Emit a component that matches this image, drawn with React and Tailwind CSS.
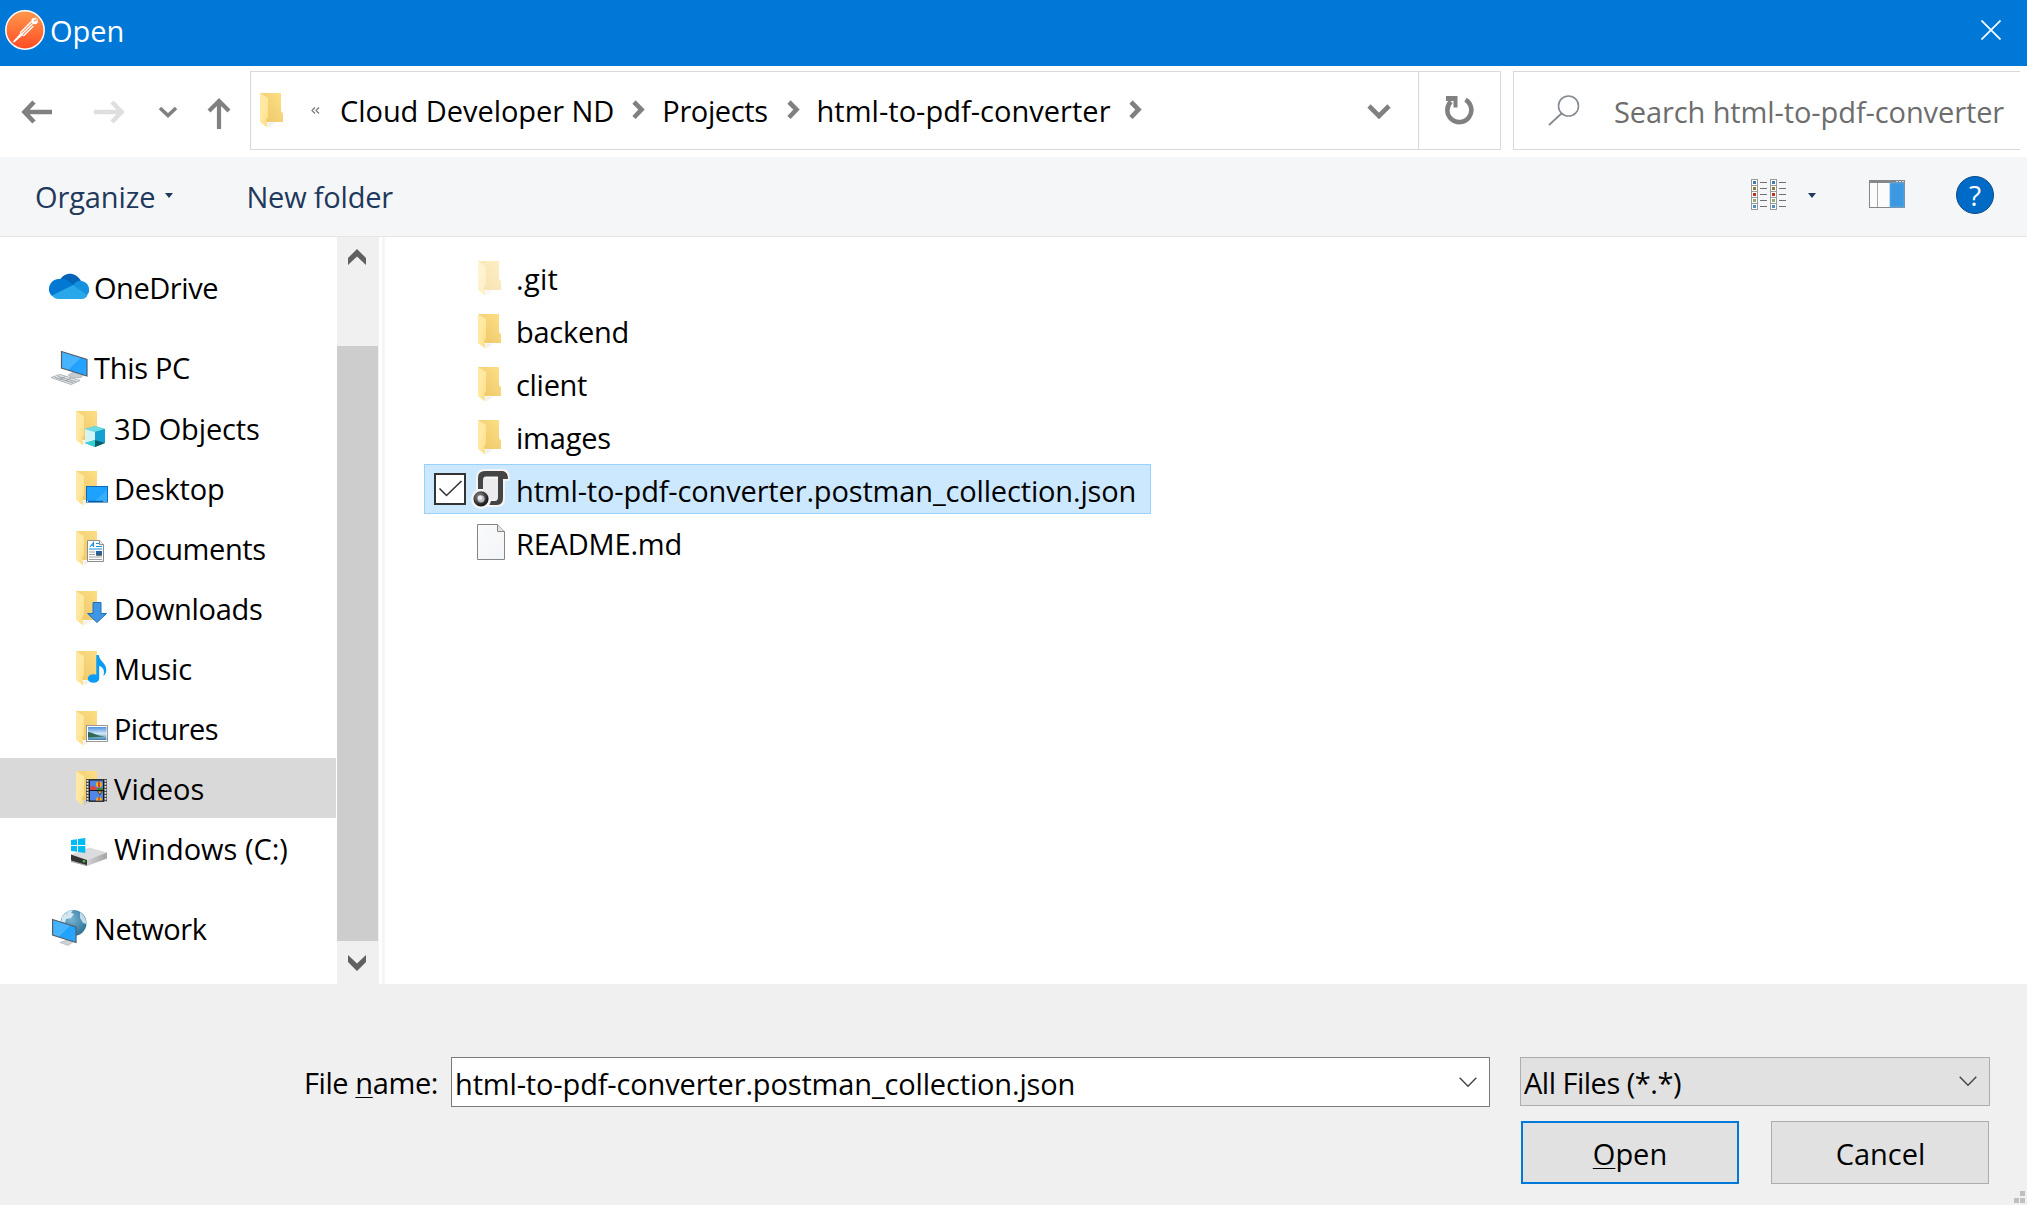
function PostmanLogo() {
  return (
    <svg className="h-10 w-10 shrink-0" viewBox="0 0 40 40">
      <defs>
        <linearGradient id="pm" x1="0" y1="0" x2="0" y2="1">
          <stop offset="0" stopColor="#ff9a4d" />
          <stop offset="1" stopColor="#ff4b24" />
        </linearGradient>
      </defs>
      <circle cx="20" cy="20" r="19.2" fill="url(#pm)" stroke="#fff" strokeWidth="1.5" />
      <path d="M9 31 L15.500 23 L18.500 25 Z" fill="#fff" />
      <path d="M15.500 22.500 L26 12 M18.800 25.500 L28 16.500 M17 24 L27 14.300" stroke="#fff" strokeWidth="1.500" strokeLinecap="round" />
      <path d="M9 31.500 L17 24" stroke="#fff" strokeWidth="1.800" strokeLinecap="round" />
      <circle cx="29.600" cy="11" r="3.300" fill="#fff" />
      <path d="M29 11 l3 -1.600" stroke="#ff8a45" strokeWidth="1.100" />
    </svg>
  );
}

function FolderShape() {
  return (
    <>
      <path d="M6.500 29.500 L15 29.500 L8.500 34.500 Z" fill="#000" opacity=".06" />
      <path d="M0 0 H21 V18 L23 20.500 V29 H6 Z" fill="url(#folderBack)" />
      <path d="M0 0 L8 5 V24.500 L6.300 26 L7.200 34.500 L0 29 Z" fill="url(#folderFlap)" />
    </>
  );
}

function Gradients() {
  return (
    <svg className="absolute h-0 w-0" aria-hidden="true">
      <defs>
        <linearGradient id="folderBack" x1="0" y1="1" x2="1" y2="0">
          <stop offset="0" stopColor="#eec565" />
          <stop offset=".5" stopColor="#f5d277" />
          <stop offset="1" stopColor="#fde086" />
        </linearGradient>
        <linearGradient id="folderFlap" x1="0" y1="0" x2="1" y2="1">
          <stop offset="0" stopColor="#ffe9a6" />
          <stop offset=".5" stopColor="#ffe8a0" />
          <stop offset="1" stopColor="#fddb78" />
        </linearGradient>
        <linearGradient id="screen" x1="0" y1="0" x2="1" y2="1">
          <stop offset="0" stopColor="#3fb4ff" />
          <stop offset=".5" stopColor="#49b4fd" />
          <stop offset=".52" stopColor="#1fa2ff" />
          <stop offset="1" stopColor="#2ba6ff" />
        </linearGradient>
        <linearGradient id="drive" x1="0" y1="0" x2="1" y2="0">
          <stop offset="0" stopColor="#d2d2d4" />
          <stop offset="1" stopColor="#a5a5a8" />
        </linearGradient>
        <radialGradient id="globe" cx=".4" cy=".35" r=".7">
          <stop offset="0" stopColor="#79b5d3" />
          <stop offset="1" stopColor="#2b6f96" />
        </radialGradient>
        <linearGradient id="sky" x1="0" y1="0" x2="0" y2="1">
          <stop offset="0" stopColor="#4d93e0" />
          <stop offset=".5" stopColor="#cfe6f6" />
          <stop offset="1" stopColor="#3d7fae" />
        </linearGradient>
        <linearGradient id="paper" x1="0" y1="0" x2="1" y2="1">
          <stop offset="0" stopColor="#fbfbfb" />
          <stop offset="1" stopColor="#f1f4f7" />
        </linearGradient>
        <radialGradient id="ring" cx=".35" cy=".3" r=".8">
          <stop offset="0" stopColor="#8b8b8b" />
          <stop offset="1" stopColor="#1d1d1d" />
        </radialGradient>
      </defs>
    </svg>
  );
}

const overlays = {
  cube: (
    <>
      <path d="M9 18 L19 15 L29 18 V32 L19 36 L9 32 Z" fill="#27b5d3" />
      <path d="M9 18 L19 15 L29 18 L19 21 Z" fill="#6ddbe2" />
      <path d="M9 18 L19 21 V29 L9 32 Z" fill="#d3f3f5" />
      <path d="M19 21 L29 18 V32 L19 29 Z" fill="#14a0d2" />
      <path d="M9 32 L19 29 V36 Z" fill="#35cfd6" />
      <path d="M29 32 L19 29 V36 Z" fill="#0a5c66" />
    </>
  ),
  desktop: (
    <>
      <rect x="10.500" y="15.500" width="21" height="15.500" fill="#1ea2ff" stroke="#0b6cb9" />
      <path d="M19 30 L31 19 V30 Z" fill="#48b6ff" opacity=".6" />
      <path d="M11 30.500 H31" stroke="#0a5fa5" strokeWidth="1.500" />
      <path d="M11 30.300 h1 M27.500 30.300 h1 M29.500 30.300 h1" stroke="#fff" />
    </>
  ),
  document: (
    <>
      <path d="M11.500 9.500 H23.500 L27.500 13.500 V30.500 H11.500 Z" fill="#fff" stroke="#8d8d8d" />
      <path d="M23.500 9.500 V13.500 H27.500" fill="#eee" stroke="#8d8d8d" />
      <path d="M14 16 L17.500 11.500 V16 M15.500 14.300 H17.500 M20 12.500 H23 M20 15.500 H26 M13 18 H26" stroke="#1b8fe0" strokeWidth="1.100" fill="none" />
      <path d="M13 21 H19 M13 23.500 H19 M13 26 H26 M13 28.500 H26" stroke="#9a9a9a" strokeWidth=".9" />
      <rect x="20" y="20" width="6" height="4.500" fill="#2d5f9e" />
      <path d="M20 24.500 L23 22.500 L26 24.500 Z" fill="#2c5b3b" />
    </>
  ),
  download: <path d="M17 11.500 H25 V22.500 H30.500 L21 31.500 L11.500 22.500 H17 Z" fill="#3f96e4" stroke="#2170b4" />,
  music: (
    <>
      <ellipse cx="17.500" cy="27.500" rx="5.700" ry="4.300" fill="#0a9cf5" />
      <path d="M20.300 4 H22.800 C23.300 10 30.300 12 30.300 19 C30.300 21.500 29.300 23.500 27.300 25 C29 20 27.500 16.500 23.200 14.800 V27.500 H20.300 Z" fill="#0a9cf5" />
    </>
  ),
  picture: (
    <>
      <rect x="10.500" y="14.500" width="21" height="16" fill="#fff" stroke="#9a9a9a" />
      <rect x="12" y="16" width="18.500" height="13" fill="url(#sky)" />
      <path d="M12 21 C16 21 20 24.500 29 25.500 L12 26.500 Z" fill="#2f6b52" />
    </>
  ),
  video: (
    <>
      <rect x="10" y="8" width="21" height="23" fill="#4e4e4e" />
      <path d="M11.500 9 V31 M29.500 9 V31" stroke="#e6e6e6" strokeWidth="1.800" strokeDasharray="1.700 1.300" />
      <rect x="13.500" y="9" width="14" height="21" fill="#4f86e8" stroke="#1b1b1b" />
      <path d="M14 16 L18 14.500 L22 19 H14 Z" fill="#d8463f" />
      <path d="M22 17 H27 V19 H20 Z" fill="#3a8a3a" />
      <path d="M14 19.500 H27" stroke="#1b1b1b" />
      <circle cx="23" cy="13.500" r="3" fill="#f2b31b" />
      <path d="M23 10.500 v6" stroke="#c4261d" strokeWidth="1.500" />
      <path d="M21.500 20 h4.500 l-2.200 4 Z" fill="#f2b31b" stroke="#222" strokeWidth=".7" />
      <path d="M20 29.500 a3 3.500 0 0 1 6 0 Z" fill="#f2b31b" />
      <path d="M23 26 v3.500" stroke="#c4261d" strokeWidth="1.200" />
    </>
  ),
};

function PlaceFolder({ kind }) {
  return (
    <svg className="h-[38px] w-9 shrink-0" viewBox="0 -2 36 38">
      <FolderShape />
      {overlays[kind]}
    </svg>
  );
}

function OneDriveIcon() {
  return (
    <svg className="mb-0.5 h-[26px] w-10 shrink-0" viewBox="0 0 40 26">
      <path d="M11 7 C14 0 26 -3 32 8 L24 16 L10 12 Z" fill="#0364b8" />
      <path d="M11 6 C16 5 20 8 24 12 L14 20 L3 23 C-1 19 -1 14 2 10 C4 7 8 5.500 11 6 Z" fill="#0078d4" />
      <path d="M24 12 C27 8 30 7.500 33 8 C38 9 41 14 40 19 L37 24 L24 18 Z" fill="#1490df" />
      <path d="M3 22.500 L24 12 L38.500 22.500 C37 25 35 26 33 26 H9 C6.500 26 4.500 24.500 3 22.500 Z" fill="#28a8ea" />
    </svg>
  );
}

function PcIcon() {
  return (
    <svg className="h-9 w-[37px] shrink-0" viewBox="0 0 37 36">
      <path d="M17 25 L24 21.500 L33 24.500 L30 27.500 L22 28 Z" fill="#c6ccd1" stroke="#9ba3a9" strokeWidth=".6" />
      <path d="M10.500 1.500 L36 9.500 V26 L10.500 18 Z" fill="url(#screen)" stroke="#53606b" strokeWidth="1.200" />
      <path d="M0 27.500 L9 24.500 L29 30.500 L20 34.500 Z" fill="#dfe3e6" stroke="#9fa6ab" strokeWidth=".8" />
      <path d="M4 27.500 L22 32.800 M7 26.500 L25 31.700 M9 29.500 L14 26.500 M15 31 L20 28" stroke="#8f979d" strokeWidth=".8" />
    </svg>
  );
}

function DriveIcon() {
  return (
    <svg className="mt-2 h-7 w-[37px] shrink-0" viewBox="0 0 37 28">
      <path d="M0 16.500 L18 9.500 L36 14.500 L16 22 Z" fill="#dcdcde" />
      <path d="M16 22 L36 14.500 V20.500 L16 28 Z" fill="url(#drive)" />
      <path d="M0 16.500 L16 22 V28 L0 22.500 Z" fill="#333" />
      <path d="M0 22.500 L16 27 V28 L0 24 Z" fill="#a5a5a5" />
      <circle cx="13" cy="23.300" r="1.200" fill="#3bd23b" />
      <path d="M0 2 L6 1.200 V7 H0 Z M7 1 L14.300 0 V7 H7 Z M0 8 H6 V13.800 L0 13 Z M7 8 H14.300 V15 L7 14 Z" fill="#00bcf2" />
    </svg>
  );
}

function NetworkIcon() {
  return (
    <svg className="h-9 w-9 shrink-0" viewBox="0 0 36 36">
      <circle cx="21.500" cy="13" r="13" fill="url(#globe)" />
      <path d="M10 7 C13 3 17 0.500 21 0.300 L19 3 L22 4 L19 8 L14 9 L13 13 L9 12 Z" fill="#d6e9f0" />
      <path d="M28 2 C32 5 34.500 9 34.300 14 L31 13 L28 8 Z M17 0.600 L13 4 L16 6 Z" fill="#bfdce8" />
      <path d="M8 32.500 L16 29.500 L21 32 L16 35.500 Z" fill="#ccd2d6" stroke="#9ba3a9" strokeWidth=".5" />
      <path d="M0.600 9.500 L24 17 V32.500 L0.600 25 Z" fill="url(#screen)" stroke="#53606b" strokeWidth="1.200" />
    </svg>
  );
}

function FolderIcon({ faded }) {
  return (
    <svg className={faded ? "mt-[3px] h-[35px] w-[33px] opacity-50" : "mt-[3px] h-[35px] w-[33px]"} viewBox="0 0 33 35">
      <FolderShape />
    </svg>
  );
}

function JsonIcon() {
  return (
    <svg className="h-[42px] w-10" viewBox="0 0 40 42">
      <g stroke="#f4f4f4" strokeWidth="4" strokeLinejoin="round" fill="#f4f4f4">
        <path d="M7 22 V10 Q7 3 14 3 H33 Q37 4 37 11 H32 V31 Q32 37 26 37 H18 L10 31 Z" />
        <circle cx="10" cy="31" r="8" />
      </g>
      <path d="M12 11 H27 V32 H20 L12 24 Z" fill="#ebebef" />
      <path d="M7 21 V10 Q7 3 14 3 H32 Q37 4 37 11 H32 V30 Q32 37 26 37 H18.500 L20 33 H24 Q27 33 27 29 V8.500 H15 Q12 8.500 12 12 V21 Z" fill="#444" />
      <circle cx="10" cy="30.800" r="5.600" fill="#b9bcc1" stroke="url(#ring)" strokeWidth="4" />
      <circle cx="9" cy="29.800" r="2.200" fill="#e9edf1" />
    </svg>
  );
}

function FileIcon() {
  return (
    <svg className="h-9 w-[34px]" viewBox="0 0 34 36">
      <path d="M0.500 0.500 H20.500 L27.500 7.500 V35.500 H0.500 Z" fill="url(#paper)" stroke="#858585" />
      <path d="M20.500 0.500 V7.500 H27.500" fill="#e2e2e2" stroke="#858585" />
    </svg>
  );
}

function Crumb() {
  return (
    <svg className="mb-0.5 h-5 w-[13px] shrink-0" viewBox="0 0 13 20">
      <path d="M2 2 L9.500 9.500 L2 17.500" fill="none" stroke="#808080" strokeWidth="4.600" />
    </svg>
  );
}

function ThinChevron() {
  return (
    <svg className="h-[11px] w-[18px]" viewBox="0 0 18 11">
      <path d="M0.700 0.700 L9 9.300 L17.300 0.700" fill="none" stroke="#444" strokeWidth="1.400" />
    </svg>
  );
}

function ViewIcon() {
  const colors = ["#3e7fb5", "#8c7a3c", "#c33318", "#8fae7c", "#4a8fc0"];
  return (
    <svg className="h-[31px] w-9 shrink-0" viewBox="0 0 36 31">
      {[0, 19].map((x) =>
        colors.map((c, i) => (
          <g key={x + c}>
            <rect x={x + 0.5} y={i * 6 + 0.5} width="6" height="6" fill="#fff" stroke="#9a9a9a" />
            <rect x={x + 2} y={i * 6 + 2} width="3" height="3" fill={c} />
            <path d={`M${x + 9} ${i * 6 + 3.5} h7`} stroke="#707070" />
          </g>
        ))
      )}
    </svg>
  );
}

function SmallCaret() {
  return (
    <svg className="h-[5px] w-2 shrink-0" viewBox="0 0 8 5">
      <path d="M0 0 H8 L4 5 Z" fill="#1e395b" />
    </svg>
  );
}

const places = [
  ["3D Objects", "cube", "pt-px tracking-[-0.15px]"],
  ["Desktop", "desktop", "pt-px tracking-[-0.2px]"],
  ["Documents", "document", "pt-px tracking-[-0.4px]"],
  ["Downloads", "download", "pt-0.5 tracking-[-0.3px]"],
  ["Music", "music", "pt-0.5 tracking-[-0.2px]"],
  ["Pictures", "picture", "pt-0.5 tracking-[-0.6px]"],
  ["Videos", "video", "pt-0.5 tracking-[0.1px]"],
];

const files = [
  [".git", "faded", "tracking-[0.3px]"],
  ["backend", "folder", "tracking-[-0.25px]"],
  ["client", "folder", "tracking-[-0.3px]"],
  ["images", "folder", "tracking-[-0.2px]"],
  ["html-to-pdf-converter.postman_collection.json", "json", "tracking-[-0.15px]"],
  ["README.md", "file", "tracking-[-0.2px]"],
];

function FileRow({ name, kind, tracking }) {
  const selected = kind === "json";
  return (
    <div
      className={
        selected
          ? "flex h-[50px] w-[727px] items-center gap-[5px] border border-[#99d1ff] bg-[#cce8ff] pl-[9px]"
          : "flex h-[50px] w-[727px] items-center gap-[5px] border border-transparent pl-[9px]"
      }
    >
      <div className="h-8 w-8 shrink-0">
        {selected && (
          <svg className="h-8 w-8" viewBox="0 0 32 32">
            <rect x="1" y="1" width="30" height="30" fill="#fff" stroke="#333" strokeWidth="2" />
            <path d="M5.500 15.500 L12.500 22.500 L27.500 8" fill="none" stroke="#333" strokeWidth="1.600" />
          </svg>
        )}
      </div>
      <div className="flex w-10 shrink-0 justify-end">
        {kind === "json" && <JsonIcon />}
        {kind === "file" && <FileIcon />}
        {(kind === "folder" || kind === "faded") && <FolderIcon faded={kind === "faded"} />}
      </div>
      <span className={`pt-[3px] ${tracking}`}>{name}</span>
    </div>
  );
}

export default function App() {
  return (
    <div className="flex h-[1205px] w-[2027px] flex-col overflow-hidden bg-white font-['Open_Sans',sans-serif] text-[29px] leading-[40px] whitespace-nowrap text-black">
      <Gradients />

      <header className="flex h-[66px] shrink-0 items-start bg-[#0078d8] pl-[5px] text-white">
        <div className="flex grow pt-[10px]">
          <PostmanLogo />
          <span className="pt-px pl-[5px]">Open</span>
        </div>
        <svg className="mt-5 mr-[26px] h-5 w-5" viewBox="0 0 20 20">
          <path d="M0.500 0.500 L19.500 19.500 M19.500 0.500 L0.500 19.500" stroke="#fff" strokeWidth="1.700" />
        </svg>
      </header>

      <div className="flex h-[91px] shrink-0 pt-[5px]">
        <div className="flex h-[79px] w-[250px] shrink-0 items-center">
          <svg className="mt-[3px] ml-[21px] h-6 w-[31px]" viewBox="0 0 31 24">
            <path d="M31 12 H4 M13 2 L3.500 12 L13 22" fill="none" stroke="#808080" strokeWidth="4.600" />
          </svg>
          <svg className="mt-[3px] ml-[42px] h-6 w-[31px]" viewBox="0 0 31 24">
            <path d="M0 12 H27 M18 2 L27.500 12 L18 22" fill="none" stroke="#dfdfdf" strokeWidth="4.600" />
          </svg>
          <svg className="mt-[2px] ml-[33px] h-3 w-[20px]" viewBox="0 0 20 12">
            <path d="M2 2 L10 9.500 L18 2" fill="none" stroke="#808080" strokeWidth="3.600" />
          </svg>
          <svg className="mt-[6px] ml-[29px] h-[31px] w-[24px]" viewBox="0 0 24 31">
            <path d="M12 31 V4 M2 13 L12 3 L22 13" fill="none" stroke="#808080" strokeWidth="4.200" />
          </svg>
        </div>

        <div className="flex h-[79px] w-[1251px] shrink-0 border border-[#d9d9d9]">
          <div className="flex grow items-center pl-[9px]">
            <svg className="h-[35px] w-6 shrink-0" viewBox="0 0 24 35">
              <FolderShape />
            </svg>
            <svg className="ml-[27px] h-[7px] w-[9px] shrink-0" viewBox="0 0 9 7">
              <path d="M4 0.500 L1 3.500 L4 6.500 M8 0.500 L5 3.500 L8 6.500" fill="none" stroke="#777" strokeWidth="1.200" />
            </svg>
            <span className="ml-5 tracking-[-0.05px]">Cloud Developer ND</span>
            <span className="ml-[18px] flex">
              <Crumb />
            </span>
            <span className="ml-[17px] tracking-[-0.4px]">Projects</span>
            <span className="ml-[19px] flex">
              <Crumb />
            </span>
            <span className="ml-[17px] tracking-[0.02px]">html-to-pdf-converter</span>
            <span className="ml-[18px] flex">
              <Crumb />
            </span>
            <svg className="mt-0.5 mr-[27px] ml-auto h-4 w-6" viewBox="0 0 24 16">
              <path d="M2 2 L12 12 L22 2" fill="none" stroke="#808080" strokeWidth="4.600" />
            </svg>
          </div>
          <div className="flex w-[82px] items-center justify-center border-l border-[#d9d9d9]">
            <svg className="h-[29px] w-[29px]" viewBox="0 0 29 29">
              <path d="M20.500 3.800 A12 12 0 1 1 6 5.500" fill="none" stroke="#808080" strokeWidth="4.600" />
              <path d="M1 0 H12.500 V11.500 H8.500 V5 H1 Z" fill="#808080" />
            </svg>
          </div>
        </div>

        <div className="ml-3 flex h-[79px] w-[507px] shrink-0 items-center border-y border-l border-[#d9d9d9]">
          <svg className="ml-[34px] h-[31px] w-[32px] shrink-0" viewBox="0 0 32 31">
            <circle cx="20.500" cy="11" r="10" fill="none" stroke="#848a92" strokeWidth="1.600" />
            <path d="M13.500 18.500 L1 30" stroke="#848a92" strokeWidth="1.800" />
          </svg>
          <span className="ml-[34px] pt-0.5 tracking-[-0.1px] text-[#6d6d6d]">Search html-to-pdf-converter</span>
        </div>
      </div>

      <div className="flex h-20 shrink-0 items-center border-b border-[#e5e5e5] bg-[#f5f6f7] text-[#1e395b]">
        <span className="ml-[35px] tracking-[-0.1px]">Organize</span>
        <span className="mb-[3px] ml-[10px] flex">
          <SmallCaret />
        </span>
        <span className="ml-[73px] tracking-[-0.2px]">New folder</span>
        <div className="mr-[33px] mb-1 ml-auto flex items-center">
          <ViewIcon />
          <span className="ml-[21px] flex pt-px">
            <SmallCaret />
          </span>
          <svg className="mb-0.5 ml-[53px] h-7 w-9" viewBox="0 0 36 28">
            <rect x=".5" y=".5" width="35" height="27" fill="#fbfbfb" stroke="#85888b" />
            <rect width="36" height="3" fill="#85888b" />
            <path d="M27 1.500 h2 M30 1.500 h2 M33 1.500 h2" stroke="#d5d7d9" />
            <path d="M8.500 3 V27" stroke="#a9a9a9" />
            <rect x="21" y="3" width="14" height="24" fill="#3d98e2" stroke="#5eaee9" strokeWidth=".8" />
          </svg>
          <div className="ml-[51px] flex h-[38px] w-[38px] items-center justify-center rounded-full border border-[#0a4a86] bg-[#006bc7] text-[28px] leading-none text-white">
            <span className="font-medium">?</span>
          </div>
        </div>
      </div>

      <div className="flex h-[747px] shrink-0">
        <nav className="flex w-[336px] shrink-0 flex-col pt-5">
          <div className="flex h-[60px] items-center pl-[49px]">
            <OneDriveIcon />
            <span className="ml-[5px] pt-0.5 tracking-[-0.45px]">OneDrive</span>
          </div>
          <div className="mt-[21px] flex h-[60px] items-center pl-[51px]">
            <PcIcon />
            <span className="ml-[6px] tracking-[-0.3px]">This PC</span>
          </div>
          {places.map(([name, kind, tracking]) => (
            <div
              key={name}
              className={
                name === "Videos"
                  ? "flex h-[60px] items-center gap-0.5 bg-[#d9d9d9] pl-[76px]"
                  : "flex h-[60px] items-center gap-0.5 pl-[76px]"
              }
            >
              <PlaceFolder kind={kind} />
              <span className={tracking}>{name}</span>
            </div>
          ))}
          <div className="flex h-[60px] items-center pl-[71px]">
            <DriveIcon />
            <span className="ml-[6px] pt-0.5">Windows (C:)</span>
          </div>
          <div className="mt-5 flex h-[60px] items-center pl-[52px]">
            <NetworkIcon />
            <span className="ml-[6px] pt-0.5 tracking-[-0.4px]">Network</span>
          </div>
        </nav>

        <div className="ml-px flex w-[42px] shrink-0 flex-col items-center bg-[#f0f0f0]">
          <div className="flex h-[109px] items-start pt-3">
            <svg className="ml-[-2px] h-4 w-[18px]" viewBox="0 0 18 16">
              <path d="M0 9 L9 0 L18 9 V16 L9 7.500 L0 16 Z" fill="#606060" />
            </svg>
          </div>
          <div className="h-[595px] w-[41px] self-start bg-[#cdcdcd]" />
          <div className="pt-[14px]">
            <svg className="ml-[-2px] h-4 w-[18px]" viewBox="0 0 18 16">
              <path d="M0 7 L9 16 L18 7 V0 L9 8.500 L0 0 Z" fill="#606060" />
            </svg>
          </div>
        </div>
        <div className="ml-[3px] w-[3px] shrink-0 bg-[#f5f5f5]" />

        <main className="flex grow flex-col gap-[3px] pt-[15px] pl-[39px]">
          {files.map(([name, kind, tracking]) => (
            <FileRow key={name} name={name} kind={kind} tracking={tracking} />
          ))}
        </main>
      </div>

      <footer className="flex grow bg-[#f0f0f0] pt-[73px]">
        <div className="flex h-[50px] w-[451px] shrink-0 items-center justify-end pt-px pr-[13px] tracking-[-0.4px]">
          <span>
            File <span className="underline decoration-1 underline-offset-[3px]">n</span>ame:
          </span>
        </div>
        <div className="flex h-[50px] w-[1039px] shrink-0 items-center justify-between border border-[#7a7a7a] bg-white pr-[12px] pl-[3px]">
          <span className="pt-[3px] tracking-[-0.15px]">html-to-pdf-converter.postman_collection.json</span>
          <ThinChevron />
        </div>
        <div className="ml-[30px] flex w-[470px] shrink-0 flex-col">
          <div className="flex h-[49px] items-center justify-between border border-[#adadad] bg-[#e1e1e1] pr-[12px] pl-[3px]">
            <span className="pt-0.5 tracking-[-0.5px]">All Files (*.*)</span>
            <ThinChevron />
          </div>
          <div className="mt-[15px] flex justify-between px-px">
            <button className="flex h-[63px] w-[218px] items-center justify-center border-2 border-[#0078d7] bg-[#e1e1e1] pt-[3px]">
              <span>
                <span className="underline decoration-1 underline-offset-[3px]">O</span>pen
              </span>
            </button>
            <button className="flex h-[63px] w-[218px] items-center justify-center border border-[#adadad] bg-[#e1e1e1] pt-[3px] pl-px">
              Cancel
            </button>
          </div>
        </div>
        <svg className="mt-auto mr-[2px] mb-[2px] ml-auto h-3 w-[11px]" viewBox="0 0 11 12">
          <path d="M6 0 h5 v5 h-5 Z M0 7 h5 v5 h-5 Z M6 7 h5 v5 h-5 Z" fill="#bfbfbf" />
        </svg>
      </footer>
    </div>
  );
}
